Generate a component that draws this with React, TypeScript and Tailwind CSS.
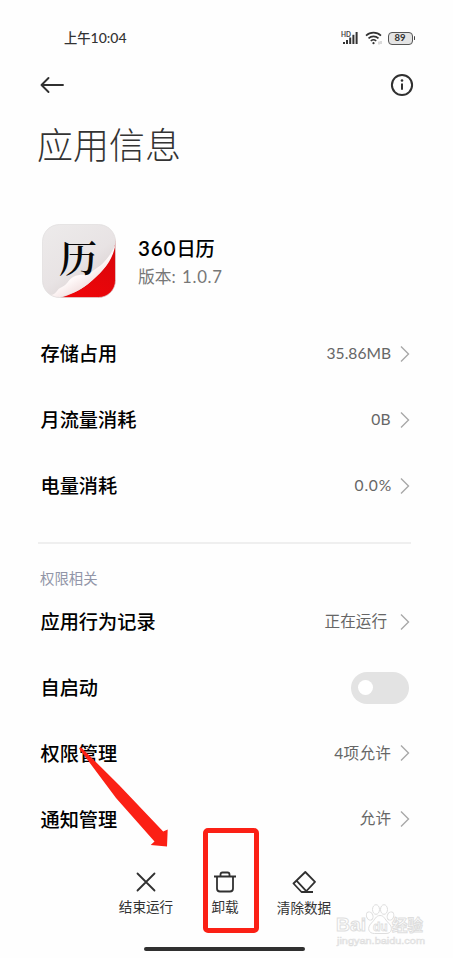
const FONT = "font-['Lato','Noto_Sans_CJK_SC',sans-serif]";

const usage = [
  { label: "存储占用", value: "35.86MB" },
  { label: "月流量消耗", value: "0B", valueClass: "mr-[9px] tracking-[0.3px]" },
  { label: "电量消耗", value: "0.0%", valueClass: "mr-[8px] tracking-[0.8px]" },
];

function Chevron() {
  return (
    <svg width="10" height="18" viewBox="0 0 10 18" fill="none">
      <path d="M1 1.5 8.5 9 1 16.5" stroke="#a8a8a8" strokeWidth="1.4" />
    </svg>
  );
}

type RowProps = { label: string; value?: string; valueClass?: string };

function Row({ label, value, valueClass = "mr-[9px]" }: RowProps) {
  return (
    <div className="flex h-[65.9px] items-center justify-between pl-[40.5px] pr-[43px]">
      <span className="text-[19.2px] font-medium text-black">{label}</span>
      {value ? (
        <span className="flex items-center">
          <span className={`text-[15.6px] text-[#666] ${valueClass}`}>{value}</span>
          <Chevron />
        </span>
      ) : (
        <span className="mr-px flex h-8 w-[58px] items-center rounded-full bg-[#e3e3e3] pl-[7px]">
          <span className="size-[15px] rounded-full bg-white" />
        </span>
      )}
    </div>
  );
}

function StatusBar() {
  return (
    <div className="flex h-[75px] items-center justify-between pl-16 pr-[38px] pt-px text-[#333]">
      <span className="text-[13.3px] font-medium">
        上午<span className="text-[14px]">10:04</span>
      </span>
      <div className="flex items-center">
        <svg width="18" height="14" viewBox="0 0 18 14" className="mr-[6px] overflow-visible">
          <g fill="#333">
            <rect x="2" y="11" width="2" height="2" />
            <rect x="5" y="9" width="2" height="4" />
            <rect x="8.2" y="6.5" width="2" height="6.5" />
            <rect x="11.4" y="3.8" width="2" height="9.2" />
            <rect x="14.6" y="1" width="2" height="12" />
          </g>
          <text x="0" y="5.6" fontSize="6.5" fontWeight="700" fill="#444">HD</text>
        </svg>
        <svg width="17" height="14" viewBox="0 0 17 14" fill="none" stroke="#333" strokeWidth="1.6" className="mr-[6px]">
          <path d="M1 4.6a11 11 0 0 1 15 0" />
          <path d="M3.5 7.4a7.3 7.3 0 0 1 10 0" />
          <path d="M5.8 10a4 4 0 0 1 5.4 0" />
          <circle cx="8.5" cy="12.2" r="1.1" fill="#333" stroke="none" />
          <path d="M14 10.5v3M16 10v3" strokeWidth=".6" stroke="#888" />
        </svg>
        <div className="flex h-[13px] w-[25px] items-center justify-center rounded-[4px] border-[1.5px] border-[#555] bg-[#e4e4e4] text-[9.5px] font-bold leading-none">
          89
        </div>
        <div className="ml-px h-1 w-[1.5px] rounded-full bg-[#444]" />
      </div>
    </div>
  );
}

function AppIcon() {
  return (
    <svg width="74" height="74" viewBox="0 0 74 74" className="shrink-0">
      <defs>
        <linearGradient id="paper" x1="0" y1="0" x2="0.7" y2="1">
          <stop offset="0" stopColor="#edebeb" />
          <stop offset="0.6" stopColor="#e8e3e4" />
          <stop offset="1" stopColor="#d6cccc" />
        </linearGradient>
        <linearGradient id="curl" x1="0.3" y1="0.3" x2="0.65" y2="0.8">
          <stop offset="0" stopColor="#e9e3e4" />
          <stop offset="0.5" stopColor="#fffafa" />
          <stop offset="1" stopColor="#f0dcdc" />
        </linearGradient>
        <linearGradient id="red" x1="1" y1="0" x2="0.5" y2="1">
          <stop offset="0" stopColor="#d4070c" />
          <stop offset="1" stopColor="#ed0509" />
        </linearGradient>
        <clipPath id="tile">
          <rect x="0.5" y="0.5" width="73" height="73" rx="17" />
        </clipPath>
      </defs>
      <g clipPath="url(#tile)">
        <rect width="74" height="74" fill="url(#paper)" />
        <path d="M74 14C72 34 62 47 46 60C37 67 28 71 18 74H74Z" fill="url(#red)" />
        <path d="M73.5 20C71 36 62 47 46 60C37 67 28 71 14 74L8 71C15 71 14 65 20 63C25 61 26 56 31 53C38 49 44 53 52 46C60 41 67 35 73.5 20Z" fill="url(#curl)" />
      </g>
      <rect x="0.5" y="0.5" width="73" height="73" rx="17" fill="none" stroke="#e0dcdc" strokeWidth="0.7" />
      <text x="17" y="48" fontSize="38" fontWeight="600" fontFamily="'Noto Serif CJK SC','Noto Sans CJK SC',serif" fill="#080808">历</text>
    </svg>
  );
}

function Watermark() {
  return (
    <svg width="96" height="46" viewBox="0 0 96 46" className="absolute left-[334px] top-[902px]" fill="#fff" stroke="#dedede" strokeWidth="1">
      <ellipse cx="35.7" cy="14" rx="3.2" ry="4.2" transform="rotate(-20 35.7 14)" />
      <ellipse cx="42" cy="7.5" rx="3.5" ry="4.8" />
      <ellipse cx="50" cy="7.5" rx="3.5" ry="4.8" />
      <ellipse cx="56.5" cy="14" rx="3.2" ry="4.2" transform="rotate(20 56.5 14)" />
      <path d="M46 13.5c-4 0-5 4-8.5 7.5-5 5-3 10.500 3 10.500h11.500c6 0 7-6 3-10-5-5-5-8-9-8Z" />
      <g fontFamily="'Liberation Sans',sans-serif" fontWeight="700">
        <text x="2" y="28.5" fontSize="19" textLength="30" lengthAdjust="spacingAndGlyphs">Bai</text>
        <text x="39" y="28.5" fontSize="12" strokeWidth=".8">du</text>
        <text x="58" y="29" fontSize="15.5" fontFamily="'Noto Sans CJK SC',sans-serif">经验</text>
        <text x="3" y="41.5" fontSize="9.5" fontWeight="400" strokeWidth=".6" textLength="88" lengthAdjust="spacingAndGlyphs">jingyan.baidu.com</text>
      </g>
    </svg>
  );
}

export default function App() {
  return (
    <div className={`relative h-[958px] w-[453px] overflow-hidden bg-[#fefefe] leading-none ${FONT}`}>
      <StatusBar />

      {/* Nav */}
      <div className="flex h-[19px] items-center justify-between pl-10 pr-[39px]">
        <svg width="24" height="18" viewBox="0 0 24 18" fill="none" stroke="#303030" strokeWidth="1.9" strokeLinecap="round" strokeLinejoin="round">
          <path d="M23 9H1.5M8.5 2 1.5 9l7 7" />
        </svg>
        <svg width="24" height="24" viewBox="0 0 24 24" fill="none" stroke="#303030" strokeWidth="2">
          <circle cx="12" cy="12" r="10.1" />
          <path d="M12 10.5v6.3" />
          <circle cx="12" cy="7.5" r="1.3" fill="#303030" stroke="none" />
        </svg>
      </div>
      <h1 className="mt-[33px] h-9 pl-[37px] text-[36px] font-light leading-9 text-[#333]">应用信息</h1>

      {/* App header */}
      <div className="mt-[61px] flex h-[74px] items-center pl-[41.5px]">
        <AppIcon />
        <div className="ml-[22.5px] flex flex-col gap-[10px] pt-0.5">
          <div className="text-[19.2px] font-medium text-black">
            <span className="text-[20.5px] font-semibold tracking-[0.9px]">360</span>日历
          </div>
          <div className="text-[16.8px] text-[#777]">
            版本<span className="mr-[2px]">:</span> <span className="tracking-[0.7px]">1.0.7</span>
          </div>
        </div>
      </div>

      {/* Usage */}
      <div className="mt-[23px]">
        {usage.map((u) => (
          <Row key={u.label} {...u} />
        ))}
      </div>
      <div className="ml-[38px] mr-[42px] mt-[23px] h-0.5 bg-[#efefef]" />

      {/* Permissions */}
      <div className="mt-[26px] h-[19px] pl-10 text-[14.4px] leading-[17px] text-[#9296a8]">权限相关</div>
      <Row label="应用行为记录" value="正在运行" valueClass="mr-[13px]" />
      <Row label="自启动" />
      <Row label="权限管理" value="4项允许" valueClass="mr-[9px] tracking-[0.2px]" />
      <Row label="通知管理" value="允许" />

      {/* Bottom actions */}
      <div className="mt-[18px] flex h-[46px] pl-[106px] text-[13.6px] text-[#333]">
        <div className="flex w-20 flex-col items-center gap-[7px]">
          <svg width="24" height="24" viewBox="0 0 24 24" stroke="#303030" strokeWidth="1.8" strokeLinecap="round">
            <path d="m3.5 3.5 17 17m0-17-17 17" />
          </svg>
          结束运行
        </div>
        <div className="flex w-[78px] flex-col items-center gap-[7px]">
          <svg width="24" height="24" viewBox="0 0 24 24" fill="none" stroke="#303030" strokeWidth="1.8">
            <path d="M1 6.5h22M4 7v11.500q0 3 3 3h10q3 0 3-3V7M7.500 6V4.500q0-2 2-2h5q2 0 2 2V6" />
          </svg>
          卸载
        </div>
        <div className="flex w-20 flex-col items-center gap-[8px]">
          <svg width="24" height="24" viewBox="0 0 24 24" fill="none" stroke="#303030" strokeWidth="1.8" strokeLinejoin="round">
            <path d="M13.300 2 23 11.800 13.500 22H9.500L1.500 13.500ZM4.500 10.700 14.500 21.300M12.500 22H21" />
          </svg>
          清除数据
        </div>
      </div>
      <div className="ml-36 mt-[31px] h-1 w-[161px] rounded-full bg-[#303030]" />

      <Watermark />

      {/* Annotations over the screen */}
      <div className="absolute left-[203px] top-[828px] h-[104.5px] w-[56px] rounded-[5px] border-5 border-[#fb2015]" />
      <svg width="90" height="100" viewBox="79 747 90 100" className="absolute left-[79px] top-[747px]">
        <path d="M79.200 748.700 81 747.200 119 785 163.200 831.500 167.700 829.500 167 846.500 150.700 845 154.500 841.500 116 798Z" fill="#fb2015" />
      </svg>
    </div>
  );
}
